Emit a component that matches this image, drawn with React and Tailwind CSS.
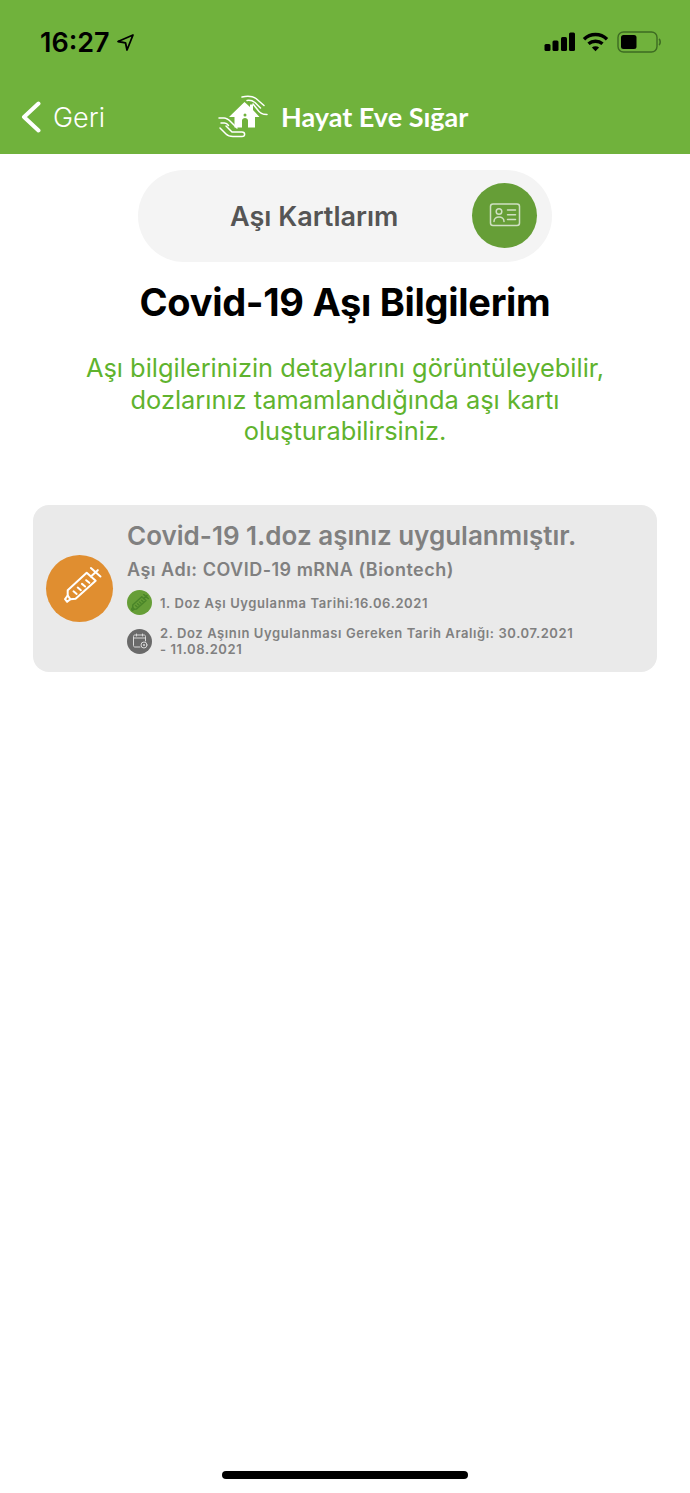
import React from 'react';

const sans = { fontFamily: 'Inter, "Noto Sans", sans-serif' };

function StatusIcons() {
  return (
    <div className="flex items-center">
      <svg width="32" height="20" viewBox="0 0 32 20" fill="#000" className="mr-[6px] -mt-[1px]">
        <rect x="0.5" y="12" width="6" height="7" rx="1.5" />
        <rect x="8.5" y="8.5" width="6" height="10.5" rx="1.5" />
        <rect x="17" y="5" width="6" height="14" rx="1.5" />
        <rect x="25" y="0.5" width="6" height="18.5" rx="1.5" />
      </svg>
      <svg width="27" height="20" viewBox="0 0 26 20" fill="none" stroke="#000" strokeWidth="3.4" className="mr-[8px]">
        <path d="M1.5 7.2 C8 1 18 1 24.5 7.2" />
        <path d="M6 11.8 C10 8.4 16 8.4 20 11.8" />
        <path d="M13 19.2 L9.4 15.4 C11.4 13.8 14.6 13.8 16.6 15.4 Z" fill="#000" stroke="none" />
      </svg>
      <svg width="44" height="22" viewBox="0 0 44 22" fill="none">
        <rect x="1" y="1" width="39" height="20" rx="5.5" stroke="#3d6b22" strokeWidth="1.4" />
        <rect x="4" y="4" width="15.5" height="14" rx="2.5" fill="#000" />
        <path d="M42 8 C43.6 9 43.6 13 42 14" stroke="#3d6b22" strokeWidth="1.6" />
      </svg>
    </div>
  );
}

function LogoMark() {
  return (
    <svg width="52" height="44" viewBox="0 0 52 44" fill="none" stroke="#fff" strokeWidth="1.5" strokeLinecap="round" strokeLinejoin="round">
      <path d="M11 22 L26.5 7 L32 12 L32 9.5 L35 9.5 L35 15 L41.5 22 L37 22 L37 32.5 L30 32.5 L30 25.5 C30 22 24 22 24 25.5 L24 32.5 L16.5 32.5 L16.5 22 Z" fill="#fff" stroke="none" />
      <circle cx="27" cy="20" r="1.5" fill="#70b23c" stroke="none" />
      <path d="M24 2 C29 1 35 1.5 38 3.5 L46 10.5" />
      <path d="M29 5.5 C32 5 35 6 37 7.5 L42.5 13" />
      <path d="M35 9 L39 14 C41 17 43 19.5 49 19.5" />
      <path d="M1 23 L6 23 C9 23 11 25 13 27 L19 33" />
      <path d="M3 28 L6.5 28 C8 28 9.5 29 10.5 30.5" />
      <path d="M2 33 L8 39 C10 41 12 41.5 15 41.5 L24 41.5 C27.5 41.5 27.5 37 24 37 L14 37 L8 31" />
    </svg>
  );
}

function CardIcon() {
  return (
    <svg width="32" height="26" viewBox="0 0 32 26" fill="none" stroke="#cfe0c2" strokeWidth="1.5" strokeLinecap="round">
      <rect x="1.5" y="2" width="29" height="21.5" rx="2.5" />
      <circle cx="10" cy="9.5" r="2.8" />
      <path d="M5 19.5 C5 13.5 15 13.5 15 19.5" />
      <path d="M18.5 8 H26.5 M18.5 12.8 H26.5 M18.5 17.5 H26.5" />
    </svg>
  );
}

function Syringe({ size, color, width = 1.6, className }) {
  return (
    <svg width={size} height={size} viewBox="0 0 36 36" fill="none" stroke={color} strokeWidth={width} strokeLinecap="round" strokeLinejoin="round" className={className}>
      <path d="M3.5 22 L21.5 5.5 L30 13 L11 30 L6 30.5 L3.5 27 Z" />
      <path d="M3.5 27 L1 30.5 L3 33 L6 30.5" />
      <path d="M25.5 9 L32 3 M25.5 1 L34.5 9" />
      <path d="M9 23 L12 25.5 M13 19.5 L16 22 M17 16 L20 18.5 M21 12.5 L24 15" />
    </svg>
  );
}

function CalendarIcon() {
  return (
    <svg width="16" height="16" viewBox="0 0 16 16" fill="none" stroke="#d8d8d8" strokeWidth="1" strokeLinecap="round">
      <path d="M8 14 H3 C2 14 1.5 13.5 1.5 12.5 V3.5 C1.5 2.5 2 2 3 2 H12 C13 2 13.5 2.5 13.5 3.5 V8" />
      <path d="M1.5 5 H13.5 M4.5 1 V3 M10.5 1 V3" />
      <circle cx="12" cy="12" r="3" />
      <circle cx="12" cy="12" r="1" fill="#d8d8d8" stroke="none" />
    </svg>
  );
}

export default function App() {
  return (
    <div className="w-[690px] h-[1493px] bg-white flex flex-col" style={sans}>
      <header className="h-[154px] bg-[#70b23c] shrink-0 flex flex-col">
        <div className="h-[84px] pl-[40px] pr-[29px] flex items-center justify-between">
          <div className="flex items-center gap-[6px] text-black">
            <span className="text-[27px] font-semibold leading-none">16:27</span>
            <svg width="19" height="19" viewBox="0 0 19 19" fill="none" stroke="#000" strokeWidth="1.8" strokeLinejoin="round">
              <path d="M17 2 L2 8.5 L9.5 9.8 L11 17 Z" />
            </svg>
          </div>
          <StatusIcons />
        </div>
        <div className="flex-1 flex items-center pl-[21px] pb-[4px]">
          <div className="flex items-center gap-[12px] w-[198px]">
            <svg width="20" height="32" viewBox="0 0 20 32" fill="none" stroke="#fff" strokeWidth="4" strokeLinecap="round" strokeLinejoin="round">
              <path d="M17.5 2.5 L3 16 L17.5 29.5" />
            </svg>
            <span className="text-white text-[27px] font-light leading-none">Geri</span>
          </div>
          <div className="flex items-center gap-[11px] -ml-[1px]">
            <LogoMark />
            <span className="text-white text-[27px] font-bold leading-none -mt-[2px]" style={{ fontFamily: 'Lato, sans-serif' }}>Hayat Eve Sığar</span>
          </div>
        </div>
      </header>

      <main className="flex flex-col items-center pt-[16px]">
        <div className="w-[414px] h-[92px] rounded-full bg-[#f4f4f4] flex items-center pl-[92px] pr-[15px] pb-[2px] justify-between">
          <span className="text-[27px] font-semibold text-[#555555] mt-[4px]">Aşı Kartlarım</span>
          <div className="w-[65px] h-[65px] rounded-full bg-[#669e37] flex items-center justify-center">
            <CardIcon />
          </div>
        </div>

        <h1 className="mt-[16px] text-[38px] font-bold text-black leading-[48px] tracking-[-0.3px]">Covid-19 Aşı Bilgilerim</h1>

        <p className="mt-[26px] w-[560px] text-center text-[25.4px] leading-[31.5px] text-[#5fb32e]">
          Aşı bilgilerinizin detaylarını görüntüleyebilir, dozlarınız tamamlandığında aşı kartı oluşturabilirsiniz.
        </p>

        <section className="mt-[58px] w-[624px] h-[167px] rounded-[16px] bg-[#eaeaea] flex items-center pl-[13px] pr-[20px]">
          <div className="w-[67px] h-[67px] rounded-full bg-[#e08e30] flex items-center justify-center shrink-0">
            <Syringe size={38} color="#fff" width={1.9} className="ml-[6px] mb-[5px]" />
          </div>
          <div className="ml-[14px] flex-1 flex flex-col text-[#808080]">
            <div className="text-[26px] font-semibold leading-[34px]">Covid-19 1.doz aşınız uygulanmıştır.</div>
            <div className="mt-[5px] text-[18px] font-semibold leading-[24px] tracking-[0.5px]">Aşı Adı: COVID-19 mRNA (Biontech)</div>
            <div className="mt-[8px] flex items-center gap-[8px]">
              <div className="w-[25px] h-[25px] rounded-full bg-[#669e37] flex items-center justify-center shrink-0">
                <Syringe size={18} color="#4a8529" width={3} />
              </div>
              <span className="text-[13px] font-semibold leading-[16px] tracking-[0.6px]">1. Doz Aşı Uygulanma Tarihi:16.06.2021</span>
            </div>
            <div className="mt-[10px] flex items-center gap-[8px]">
              <div className="w-[25px] h-[25px] rounded-full bg-[#6a6a6a] flex items-center justify-center shrink-0">
                <CalendarIcon />
              </div>
              <span className="w-[420px] text-[13px] font-semibold leading-[16px] tracking-[0.6px]">2. Doz Aşının Uygulanması Gereken Tarih Aralığı: 30.07.2021 - 11.08.2021</span>
            </div>
          </div>
        </section>
      </main>

      <div className="mt-auto pb-[14px] flex justify-center">
        <div className="w-[246px] h-[8px] rounded-full bg-black" />
      </div>
    </div>
  );
}
